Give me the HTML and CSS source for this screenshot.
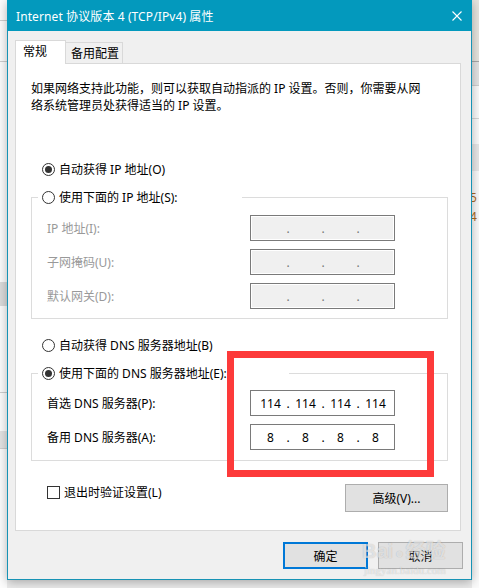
FILE: index.html
```html
<!DOCTYPE html>
<html lang="zh-CN">
<head>
    <meta charset="UTF-8">
    <title>Internet 协议版本 4 (TCP/IPv4) 属性</title>
    <link rel="stylesheet" href="styles.css">
</head>
<body>
    <div class="desk">
        <!-- window behind, left side -->
        <div class="bg-left">
            <div class="bl-line l1"></div>
            <div class="bl-line l2"></div>
            <div class="bl-band"></div>
            <div class="bl-line l3"></div>
            <div class="bl-foot"></div>
        </div>

        <!-- the dialog -->
        <div class="dialog">
            <div class="titlebar">
                <span class="title">Internet 协议版本 4 (TCP/IPv4) 属性</span>
                <svg class="close" width="10" height="10" viewBox="0 0 10 10">
                    <path d="M0.5 0.5 L9.5 9.5 M9.5 0.5 L0.5 9.5" stroke="#fff" stroke-width="1.1" fill="none"/>
                </svg>
            </div>

            <div class="dlg-body">
                <div class="tabs">
                    <div class="tab active">常规</div>
                    <div class="tab">备用配置</div>
                </div>

                <div class="panel">
                    <p class="desc">如果网络支持此功能，则可以获取自动指派的 IP 设置。否则，你需要从网<br>络系统管理员处获得适当的 IP 设置。</p>

                    <div class="radio-row first">
                        <span class="radio checked"></span>
                        <span>自动获得 IP 地址(O)</span>
                    </div>

                    <fieldset class="group">
                        <legend class="legend ip">
                            <span class="radio"></span>
                            <span>使用下面的 IP 地址(S):</span>
                        </legend>
                        <div class="field-row">
                            <span class="label disabled">IP 地址(I):</span>
                            <div class="ipbox off">
                                <span class="oct"></span><span class="dot">.</span>
                                <span class="oct"></span><span class="dot">.</span>
                                <span class="oct"></span><span class="dot">.</span>
                                <span class="oct"></span>
                            </div>
                        </div>
                        <div class="field-row">
                            <span class="label disabled">子网掩码(U):</span>
                            <div class="ipbox off">
                                <span class="oct"></span><span class="dot">.</span>
                                <span class="oct"></span><span class="dot">.</span>
                                <span class="oct"></span><span class="dot">.</span>
                                <span class="oct"></span>
                            </div>
                        </div>
                        <div class="field-row">
                            <span class="label disabled">默认网关(D):</span>
                            <div class="ipbox off">
                                <span class="oct"></span><span class="dot">.</span>
                                <span class="oct"></span><span class="dot">.</span>
                                <span class="oct"></span><span class="dot">.</span>
                                <span class="oct"></span>
                            </div>
                        </div>
                    </fieldset>

                    <div class="radio-row dns-auto">
                        <span class="radio"></span>
                        <span>自动获得 DNS 服务器地址(B)</span>
                    </div>

                    <fieldset class="group dns">
                        <legend class="legend dns-legend">
                            <span class="radio checked"></span>
                            <span>使用下面的 DNS 服务器地址(E):</span>
                        </legend>
                        <div class="field-row">
                            <span class="label">首选 DNS 服务器(P):</span>
                            <div class="ipbox">
                                <span class="oct">114</span><span class="dot">.</span>
                                <span class="oct">114</span><span class="dot">.</span>
                                <span class="oct">114</span><span class="dot">.</span>
                                <span class="oct">114</span>
                            </div>
                        </div>
                        <div class="field-row">
                            <span class="label">备用 DNS 服务器(A):</span>
                            <div class="ipbox">
                                <span class="oct">8</span><span class="dot">.</span>
                                <span class="oct">8</span><span class="dot">.</span>
                                <span class="oct">8</span><span class="dot">.</span>
                                <span class="oct">8</span>
                            </div>
                        </div>
                    </fieldset>

                    <div class="bottom-row">
                        <label class="check-row">
                            <span class="checkbox"></span>
                            <span>退出时验证设置(L)</span>
                        </label>
                        <button class="btn advanced">高级(V)...</button>
                    </div>
                </div>

                <div class="actions">
                    <button class="btn default">确定</button>
                    <button class="btn">取消</button>
                </div>
            </div>
        </div>

        <!-- window behind, right side -->
        <div class="bg-right">
            <div class="br-top"></div>
            <div class="br-bar"></div>
            <div class="br-line"></div>
            <div class="br-band"></div>
            <div class="br-text">5<br>4</div>
        </div>

        <!-- annotation drawn over the screenshot -->
        <div class="mark"></div>

        <!-- watermark -->
        <div class="watermark">
            <div class="wm-main">Bai<span class="paw">&#9679;</span>经验</div>
            <div class="wm-url">jingyan.baidu.com</div>
        </div>
    </div>
</body>
</html>
```

FILE: styles.css
```css
body {
    margin: 0;
    font-family: "Noto Sans", "Noto Sans CJK SC", sans-serif;
    font-size: 12px;
    color: #000;
    background: #f0f0f0;
}

.desk {
    position: relative;
    display: flex;
    width: 479px;
    height: 588px;
    overflow: hidden;
    background: #ececec;
}

/* background windows */
.bg-left {
    width: 7px;
    height: 588px;
    flex: none;
    background: #fdfdfd;
    display: flex;
    flex-direction: column;
}

.bl-line {
    height: 1px;
    background: #cfcfcf;
}

.bl-line.l1 { margin-top: 20px; }
.bl-line.l2 { margin-top: 40px; }

.bl-band {
    margin-top: 220px;
    height: 24px;
    background: #dcdcdc;
}

.bl-line.l3 { margin-top: 86px; }

.bl-foot {
    margin-top: 38px;
    height: 17px;
    background: #e4e4e4;
    border-bottom: 1px solid #cfcfcf;
}

.bg-right {
    width: 7px;
    height: 588px;
    flex: none;
    background: #fbfbfb;
    display: flex;
    flex-direction: column;
}

.br-top {
    height: 61px;
    background: #e7e5df;
    border-bottom: 1px solid #a9a9a9;
}

.br-bar {
    height: 23px;
    background: #e4e4e4;
    border-bottom: 1px solid #cfcfcf;
}

.br-line {
    margin-top: 32px;
    height: 1px;
    background: #d6d6d6;
}

.br-band {
    margin-top: 25px;
    height: 27px;
    background: #e8e8e8;
}

.br-text {
    margin-top: 17px;
    margin-left: -2px;
    font-size: 12px;
    line-height: 19px;
    color: #b06a20;
}

/* dialog */
.dialog {
    position: relative;
    z-index: 1;
    width: 465px;
    height: 580px;
    flex: none;
    box-sizing: border-box;
    border: 1px solid #1793b5;
    border-top: none;
    background: #f0f0f0;
    box-shadow: 0 2px 10px rgba(0, 0, 0, 0.3);
}

.titlebar {
    height: 31px;
    margin: 0 -1px;
    padding: 0 10px 0 9px;
    display: flex;
    align-items: center;
    justify-content: space-between;
    background: #0399bd;
    color: #fff;
}

.title {
    font-size: 12px;
    letter-spacing: 0.1px;
}

.close {
    display: block;
}

.dlg-body {
    padding: 9px 0 0 7px;
}

/* tabs */
.tabs {
    display: flex;
    align-items: flex-end;
    height: 23px;
    position: relative;
    z-index: 2;
}

.tab {
    box-sizing: border-box;
    height: 21px;
    width: 58px;
    padding-left: 5px;
    line-height: 21px;
    border: 1px solid #d9d9d9;
    border-bottom: none;
    background: #f0f0f0;
    margin-left: -1px;
}

.tab.active {
    width: 51px;
    height: 24px;
    margin-left: 0;
    margin-bottom: -1px;
    padding-left: 7px;
    line-height: 22px;
    background: #fff;
    position: relative;
    z-index: 1;
}

.panel {
    box-sizing: border-box;
    width: 446px;
    height: 468px;
    border: 1px solid #d9d9d9;
    background: #fff;
    padding: 16px 0 0 15px;
}

.desc {
    margin: 0;
    line-height: 17px;
}

.radio-row {
    display: flex;
    align-items: center;
    height: 20px;
    margin-left: 11px;
    gap: 4px;
}

.radio-row.first { margin-top: 45px; }
.radio-row.dns-auto { margin-top: 16px; }

.radio {
    box-sizing: border-box;
    width: 13px;
    height: 13px;
    border: 1px solid #333;
    border-radius: 50%;
    background: #fff;
    display: inline-flex;
    align-items: center;
    justify-content: center;
}

.radio.checked::after {
    content: "";
    width: 7px;
    height: 7px;
    border-radius: 50%;
    background: #333;
}

/* group boxes */
.group {
    box-sizing: border-box;
    width: 417px;
    margin: 8px 0 0 0;
    padding: 8px 52px 9px 15px;
    border: 1px solid #dcdcdc;
    min-inline-size: 0;
}

.group.dns {
    padding-top: 7px;
    padding-bottom: 10px;
}

.legend {
    display: flex;
    align-items: center;
    gap: 4px;
    height: 20px;
    padding: 0 0 0 4px;
    margin-left: -9px;
    background: #fff;
    box-sizing: border-box;
}

.legend.ip { width: 204px; }
.legend.dns-legend { width: 251px; }

.field-row {
    display: flex;
    align-items: center;
    justify-content: space-between;
    height: 26px;
}

.field-row + .field-row {
    margin-top: 8px;
}

.label.disabled {
    color: #999;
}

.ipbox {
    box-sizing: border-box;
    width: 145px;
    height: 26px;
    border: 1px solid #7a7a7a;
    background: #fff;
    display: flex;
    align-items: center;
    padding-left: 4px;
}

.ipbox.off {
    background: #f0f0f0;
    box-shadow: inset 0 0 0 1px #fff;
    color: #777;
}

.oct {
    width: 31px;
    text-align: center;
}

.dot {
    width: 4px;
    text-align: center;
}

/* bottom of panel */
.bottom-row {
    display: flex;
    justify-content: space-between;
    align-items: flex-start;
    width: 417px;
    margin-top: 23px;
}

.check-row {
    display: flex;
    align-items: center;
    gap: 4px;
    height: 16px;
    padding-left: 16px;
}

.checkbox {
    box-sizing: border-box;
    width: 13px;
    height: 13px;
    border: 1px solid #333;
    background: #fff;
}

.btn {
    box-sizing: border-box;
    font-family: inherit;
    font-size: 12px;
    color: #000;
    background: #e1e1e1;
    border: 1px solid #adadad;
    padding: 0;
    margin: 0;
}

.advanced {
    width: 103px;
    height: 28px;
}

.actions {
    display: flex;
    justify-content: flex-end;
    gap: 10px;
    margin-top: 11px;
    padding-right: 8px;
}

.actions .btn {
    width: 85px;
    height: 27px;
}

.actions .btn.default {
    border: 2px solid #0078d7;
}

/* red annotation box */
.mark {
    position: absolute;
    z-index: 5;
    left: 227px;
    top: 351px;
    width: 207px;
    height: 126px;
    box-sizing: border-box;
    border: 7px solid #fd3a3a;
}

/* baidu watermark */
.watermark {
    position: absolute;
    z-index: 6;
    left: 362px;
    top: 540px;
    color: rgba(255, 255, 255, 0.6);
    text-shadow: 0 0 1px rgba(0, 0, 0, 0.25);
    pointer-events: none;
}

.wm-main {
    font-family: "Liberation Sans", "Noto Sans CJK SC", sans-serif;
    font-size: 20px;
    font-weight: bold;
    line-height: 22px;
}

.paw {
    font-size: 14px;
    margin: 0 2px;
}

.wm-url {
    font-family: "Liberation Serif", serif;
    font-size: 11px;
    line-height: 12px;
    margin-left: 2px;
}
```
